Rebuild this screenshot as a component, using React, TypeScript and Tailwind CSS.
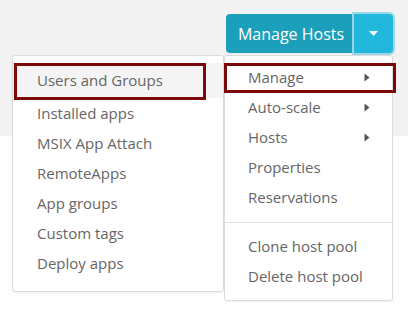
import React from 'react';

const leftItems = ['Installed apps', 'MSIX App Attach', 'RemoteApps', 'App groups', 'Custom tags', 'Deploy apps'];

const rightItems: { label: string; sub?: boolean }[] = [
  { label: 'Auto-scale', sub: true },
  { label: 'Hosts', sub: true },
  { label: 'Properties' },
  { label: 'Reservations' },
];

function Arrow() {
  return (
    <svg width="6" height="9" viewBox="0 0 6 9" className="ml-auto mr-[22px]">
      <path d="M0.5 0.5 L5.5 4.5 L0.5 8.5 Z" fill="#555" />
    </svg>
  );
}

export default function App() {
  return (
    <div className="relative w-[408px] h-[312px] bg-white font-['Open_Sans',sans-serif] text-[15px] text-[#666]">
      <div className="h-[136px] bg-[#f2f2f2] flex justify-end pt-[14px] pr-[15px]">
        <div className="flex h-[39px] rounded-[4px]">
          <button className="w-[128px] h-full bg-[#1b9fbb] text-white text-[16px] rounded-l-[4px] flex items-center justify-center pl-[2px]">
            Manage Hosts
          </button>
          <button className="w-[39px] h-full bg-[#22b8db] rounded-r-[4px] flex items-center justify-center shadow-[0_0_0_2px_#9ad6e6]">
            <svg width="9" height="5" viewBox="0 0 9 5">
              <path d="M0 0 L9 0 L4.5 5 Z" fill="#fff" />
            </svg>
          </button>
        </div>
      </div>

      {/* left submenu */}
      <div className="absolute left-[12px] top-[55px] w-[212px] h-[237px] bg-white border border-[#dcdcdc] rounded-[3px] shadow-[0_1px_2px_rgba(0,0,0,0.06)] pt-[7px]">
        <div className="relative h-[35px] bg-[#f4f4f4] flex items-center pl-[24px]">
          Users and Groups
          <div className="absolute left-[1px] top-0 w-[192px] h-[37px] border-[3px] border-[#7a0a0a]" />
        </div>
        {leftItems.map((t) => (
          <div key={t} className="h-[30px] flex items-center pl-[24px]">
            {t}
          </div>
        ))}
      </div>

      {/* main dropdown */}
      <div className="absolute left-[224px] top-[55px] w-[169px] h-[246px] bg-white border border-[#dcdcdc] rounded-[3px] shadow-[0_1px_2px_rgba(0,0,0,0.06)] pt-[6px]">
        <div className="relative h-[30px] flex items-center pl-[23px]">
          Manage
          <Arrow />
          <div className="absolute left-[-1px] top-[1px] w-[172px] h-[30px] border-[3px] border-[#7a0a0a]" />
        </div>
        {rightItems.map((it) => (
          <div key={it.label} className="h-[30px] flex items-center pl-[23px]">
            {it.label}
            {it.sub && <Arrow />}
          </div>
        ))}
        <div className="mt-[10px] mb-[8px] border-t border-[#e2e2e2]" />
        <div className="h-[30px] flex items-center pl-[23px]">Clone host pool</div>
        <div className="h-[30px] flex items-center pl-[23px]">Delete host pool</div>
      </div>
    </div>
  );
}
